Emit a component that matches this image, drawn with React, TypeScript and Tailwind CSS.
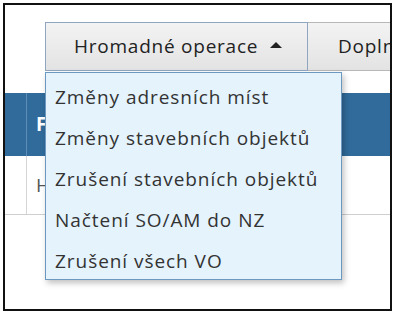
import React from 'react';

const items = [
  'Změny adresních míst',
  'Změny stavebních objektů',
  'Zrušení stavebních objektů',
  'Načtení SO/AM do NZ',
  'Zrušení všech VO',
];

export default function App() {
  return (
    <div className="w-[396px] h-[313px] bg-white p-[3px] font-['Open_Sans',sans-serif]">
      <div className="relative w-[389px] h-[308px] border-2 border-[#111] overflow-hidden">
        {/* toolbar */}
        <div className="flex mt-[17px] ml-[40px] h-[49px]">
          <button className="relative shrink-0 w-[263px] h-full border border-[#8ea6c0] bg-gradient-to-b from-[#f3f3f3] to-[#e3e3e3] text-left pl-[28px] text-[19px] tracking-[0.04em] text-[#222]">
            Hromadné operace
            <span className="absolute left-[224px] top-[19px] w-0 h-0 border-l-[6px] border-r-[6px] border-b-[6px] border-l-transparent border-r-transparent border-b-[#222]" />
          </button>
          <button className="h-full w-[120px] shrink-0 border border-[#b8b8b8] border-l-0 bg-gradient-to-b from-[#f3f3f3] to-[#e3e3e3] text-left pl-[30px] text-[19px] tracking-[0.04em] text-[#222] whitespace-nowrap overflow-hidden">
            Doplnit
          </button>
        </div>

        {/* table */}
        <div className="mt-[22px]">
          <div className="flex h-[63px] bg-[#306b9b]">
            <div className="w-[22px] border-r border-[#5d8cb6]" />
            <div className="flex items-center pl-[9px] text-[19px] font-bold text-white">F</div>
          </div>
          <div className="flex h-[59px] border-b border-[#cfcfcf]">
            <div className="w-[22px] border-r border-[#d6d6d6]" />
            <div className="flex items-center pl-[9px] text-[19px] text-[#555]">H</div>
          </div>
        </div>

        {/* dropdown */}
        <div className="absolute left-[40px] top-[67px] w-[297px] h-[208px] border border-[#6d98c0] bg-[#e5f3fd] shadow-[2px_3px_6px_rgba(0,0,0,0.25)] pt-[4px]">
          {items.map((t) => (
            <div key={t} className="h-[41px] flex items-center pl-[9px] text-[19px] tracking-[0.05em] text-[#333] whitespace-nowrap">
              {t}
            </div>
          ))}
        </div>
      </div>
    </div>
  );
}
